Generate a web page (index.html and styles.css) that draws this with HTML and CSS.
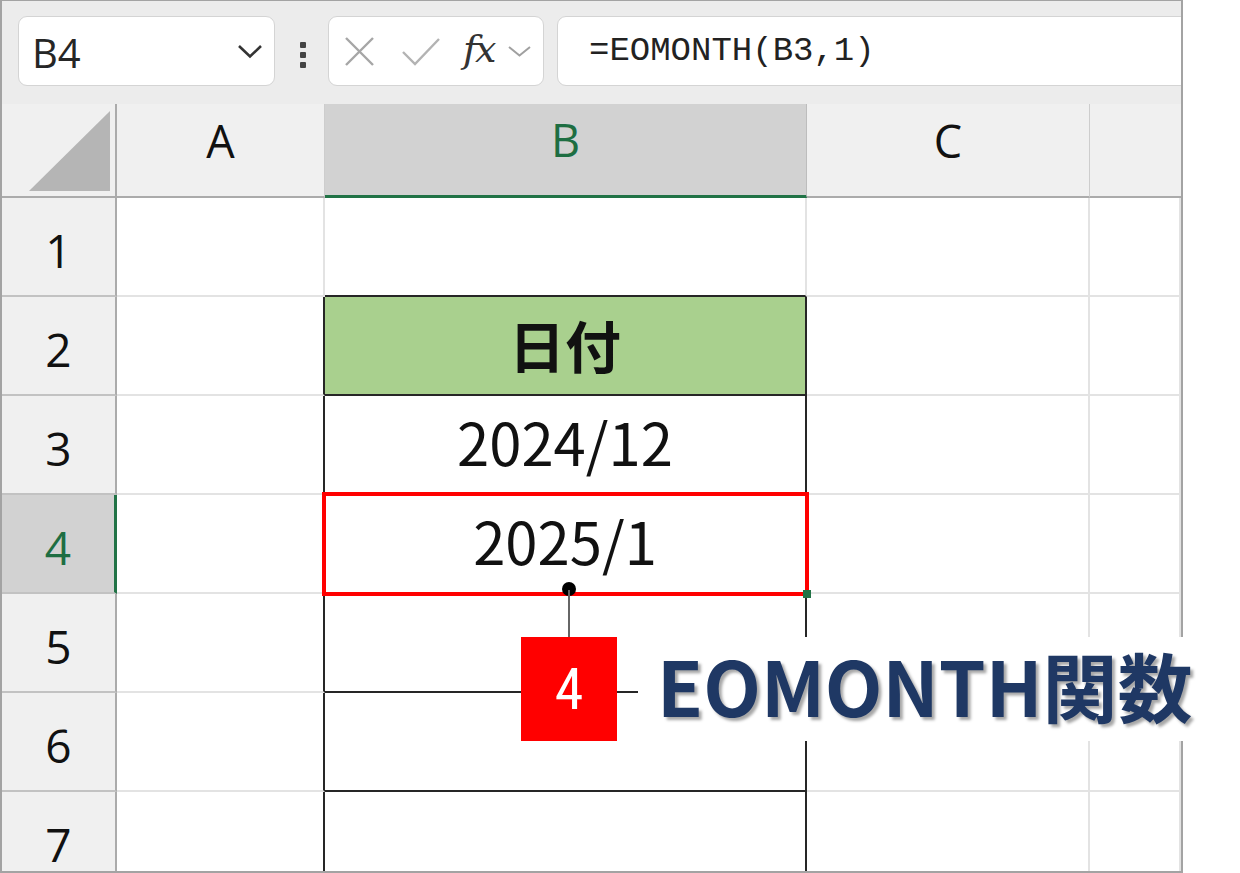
FILE: index.html
```html
<!DOCTYPE html>
<html lang="ja">
<head>
    <meta charset="UTF-8">
    <meta name="viewport" content="width=device-width, initial-scale=1.0">
    <title>EOMONTH関数</title>
    <link rel="stylesheet" href="styles.css">
</head>
<body>
    <div class="sheet">
        <!-- formula bar -->
        <div class="formula-bar">
            <div class="name-box">
                <span>B4</span>
                <svg class="chev" width="26" height="15" viewBox="0 0 26 15"><path d="M2 2 L13 12.5 L24 2" fill="none" stroke="#333" stroke-width="2.6"/></svg>
            </div>
            <div class="dots"><i></i><i></i><i></i></div>
            <div class="fn-box">
                <svg class="icon-x" width="31" height="31" viewBox="0 0 31 31"><path d="M2 2 L29 29 M29 2 L2 29" stroke="#a6a6a6" stroke-width="2.4"/></svg>
                <svg class="icon-check" width="40" height="31" viewBox="0 0 40 31"><path d="M2 16 L14 28 L38 3" fill="none" stroke="#b3b3b3" stroke-width="2.4"/></svg>
                <span class="fx">fx</span>
                <svg class="chev-sm" width="25" height="12" viewBox="0 0 25 12"><path d="M2 2 L12.5 10.5 L23 2" fill="none" stroke="#a0a0a0" stroke-width="2"/></svg>
            </div>
            <div class="formula-input">=EOMONTH(B3,1)</div>
        </div>

        <!-- sheet grid -->
        <div class="grid">
            <div class="corner"><div class="corner-tri"></div></div>
            <div class="col-head">A</div>
            <div class="col-head active">B</div>
            <div class="col-head">C</div>
            <div class="col-head last"></div>

            <div class="row-head">1</div>
            <div class="cell"></div>
            <div class="cell above-table"></div>
            <div class="cell"></div>
            <div class="cell"></div>

            <div class="row-head">2</div>
            <div class="cell left-of-table"></div>
            <div class="cell table header-cell">日付</div>
            <div class="cell"></div>
            <div class="cell"></div>

            <div class="row-head">3</div>
            <div class="cell left-of-table"></div>
            <div class="cell table value">2024/12</div>
            <div class="cell"></div>
            <div class="cell"></div>

            <div class="row-head active">4</div>
            <div class="cell left-of-table"></div>
            <div class="cell table value">2025/1</div>
            <div class="cell"></div>
            <div class="cell"></div>

            <div class="row-head">5</div>
            <div class="cell left-of-table"></div>
            <div class="cell table"></div>
            <div class="cell"></div>
            <div class="cell"></div>

            <div class="row-head">6</div>
            <div class="cell left-of-table"></div>
            <div class="cell table"></div>
            <div class="cell"></div>
            <div class="cell"></div>

            <div class="row-head">7</div>
            <div class="cell left-of-table"></div>
            <div class="cell table"></div>
            <div class="cell"></div>
            <div class="cell"></div>
        </div>
    </div>

    <!-- selection + callout drawn over the sheet -->
    <div class="selection"><span class="fill-handle"></span></div>
    <div class="pin"></div>
    <div class="pin-line"></div>
    <div class="step-badge">4</div>
    <div class="callout-label">EOMONTH関数</div>
</body>
</html>
```

FILE: styles.css
```css
* {
    box-sizing: border-box;
}

body {
    margin: 0;
    background-color: #fff;
    font-family: "Open Sans", "Liberation Sans", sans-serif;
}

.sheet {
    width: 1183px;
    height: 873px;
    border: 2px solid #a3a3a3;
    border-top-width: 1px;
    overflow: hidden;
    background-color: #fff;
}

/* formula bar */
.formula-bar {
    display: flex;
    align-items: flex-start;
    height: 103px;
    padding: 15px 0 0 16px;
    background-color: #ececec;
}

.name-box,
.fn-box,
.formula-input {
    height: 70px;
    background-color: #fff;
    border: 1px solid #d4d4d4;
    border-radius: 9px;
}

.name-box {
    width: 257px;
    display: flex;
    align-items: center;
    justify-content: space-between;
    padding: 0 11px 0 13px;
    font-size: 40px;
    color: #262626;
}

.name-box span {
    margin-top: 2px;
}

.dots {
    display: flex;
    flex-direction: column;
    gap: 4px;
    margin: 26px 0 0 25px;
}

.dots i {
    display: block;
    width: 6px;
    height: 6px;
    border-radius: 1px;
    background-color: #444;
}

.fn-box {
    width: 216px;
    margin-left: 22px;
    display: flex;
    align-items: center;
    padding-left: 15px;
}

.icon-check {
    margin-left: 26px;
}

.fx {
    margin-left: 22px;
    margin-top: -4px;
    font-family: "DejaVu Serif", "Liberation Serif", serif;
    font-style: italic;
    font-size: 38px;
    letter-spacing: -2px;
    color: #333;
}

.chev-sm {
    margin-left: 12px;
}

.formula-input {
    flex: 1;
    margin-left: 13px;
    margin-right: -20px;
    padding-left: 31px;
    display: flex;
    align-items: center;
    font-family: "Liberation Mono", monospace;
    font-size: 34px;
    color: #222;
}

/* grid */
.grid {
    display: grid;
    grid-template-columns: 115px 208px 482px 283px 1fr;
    grid-template-rows: 94px repeat(7, 99px);
}

.corner {
    display: flex;
    align-items: flex-end;
    justify-content: flex-end;
    padding: 0 5px 5px 0;
    background-color: #f0f0f0;
    border-right: 2px solid #ababab;
    border-bottom: 2px solid #ababab;
}

.corner-tri {
    width: 81px;
    height: 80px;
    background-color: #b5b5b5;
    clip-path: polygon(100% 0, 100% 100%, 0 100%);
}

.col-head {
    display: flex;
    justify-content: center;
    align-items: center;
    padding-bottom: 20px;
    background-color: #f0f0f0;
    border-right: 1px solid #cdcdcd;
    border-bottom: 2px solid #ababab;
    font-size: 45px;
    color: #111;
}

.col-head.active {
    background-color: #d2d2d2;
    color: #1e6e42;
    border-bottom: 3px solid #217346;
    border-right-color: #bdbdbd;
}

.col-head.last {
    border-right: none;
}

.row-head {
    display: flex;
    justify-content: center;
    align-items: center;
    padding-top: 6px;
    background-color: #f0f0f0;
    border-right: 2px solid #ababab;
    border-bottom: 2px solid #c2c2c2;
    font-size: 46px;
    color: #111;
}

.row-head.active {
    background-color: #d2d2d2;
    color: #1e6e42;
    border-right: 3px solid #217346;
}

.cell {
    display: flex;
    justify-content: center;
    align-items: center;
    border-right: 2px solid #e3e3e3;
    border-bottom: 2px solid #e3e3e3;
    font-family: "Noto Sans CJK JP", sans-serif;
    color: #111;
}

.cell.above-table {
    border-bottom-color: #262626;
}

.cell.left-of-table {
    border-right-color: #262626;
}

.cell.table {
    border-right-color: #262626;
    border-bottom-color: #262626;
}

.header-cell {
    padding-bottom: 4px;
    background-color: #a9d08e;
    font-weight: bold;
    font-size: 56px;
}

.value {
    padding-bottom: 8px;
    font-size: 58px;
}

/* overlays */
.selection {
    position: absolute;
    left: 322px;
    top: 492px;
    width: 487px;
    height: 104px;
    border: 4px solid #ff0000;
}

.fill-handle {
    position: absolute;
    right: -6px;
    bottom: -6px;
    width: 8px;
    height: 8px;
    background-color: #217346;
}

.pin {
    position: absolute;
    left: 562px;
    top: 582px;
    width: 14px;
    height: 14px;
    border-radius: 50%;
    background-color: #000;
}

.pin-line {
    position: absolute;
    left: 568px;
    top: 590px;
    width: 2px;
    height: 47px;
    background-color: #666;
}

.step-badge {
    position: absolute;
    left: 521px;
    top: 637px;
    width: 96px;
    height: 104px;
    display: flex;
    justify-content: center;
    align-items: center;
    background-color: #ff0000;
    color: #fff;
    font-family: "Liberation Sans Narrow", "Roboto Condensed", "Liberation Sans", sans-serif;
    font-size: 58px;
}

.callout-label {
    position: absolute;
    left: 638px;
    top: 637px;
    width: 602px;
    height: 104px;
    display: flex;
    align-items: center;
    padding: 0 0 10px 19px;
    background-color: #fff;
    font-family: "Noto Sans CJK JP", sans-serif;
    font-weight: bold;
    font-size: 75px;
    color: #1f3864;
    text-shadow: 3px 3px 3px rgba(0, 0, 0, 0.35);
}
```
